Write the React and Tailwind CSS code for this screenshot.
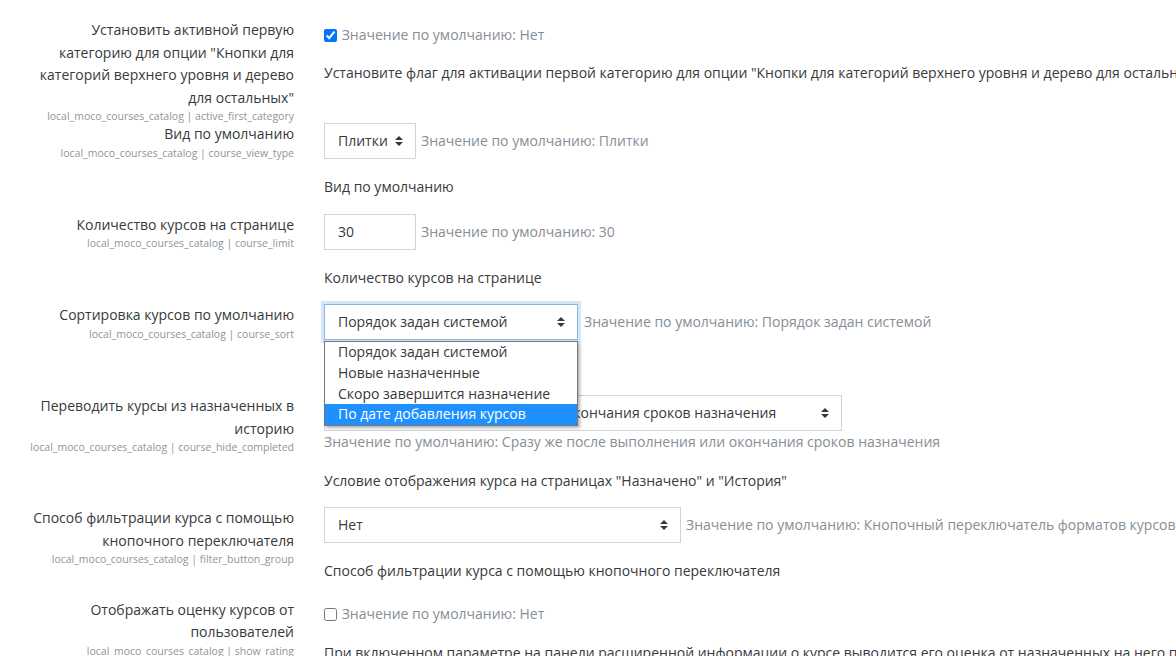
import React from "react";

function Arrows() {
  return (
    <svg width="8" height="10" viewBox="0 0 4 5" className="shrink-0">
      <path d="M2 0L0 2h4zm0 5L0 3h4z" fill="#343a40" />
    </svg>
  );
}

function Select({ value, className = "" }) {
  return (
    <div
      className={`flex h-[36px] shrink-0 items-center justify-between overflow-hidden rounded-none border bg-white pl-[13px] pr-[12px] ${className}`}
    >
      <span className="truncate">{value}</span>
      <Arrows />
    </div>
  );
}

function Row({ label, tech, className = "", children }) {
  return (
    <div className={`flex items-start ${className}`}>
      <div className="w-[294px] shrink-0 text-right">
        <div>{label}</div>
        <span className="block text-[10.5px] leading-[14px] text-[#8e959c]">{tech}</span>
      </div>
      <div className="ml-[30px] whitespace-nowrap">{children}</div>
    </div>
  );
}

export default function App() {
  return (
    <div className="relative h-[656px] w-[1176px] overflow-hidden bg-white font-['Open_Sans',sans-serif] text-[14px] leading-[22.5px] text-[#373a3c]">
      <div className="pt-[19.3px]">
        <Row
          className="h-[104px]"
          label={
            <>
              Установить активной первую
              <br />
              категорию для опции "Кнопки для
              <br />
              категорий верхнего уровня и дерево
              <br />
              для остальных"
            </>
          }
          tech="local_moco_courses_catalog | active_first_category"
        >
          <div className="pt-[4.7px]">
            <div className="flex h-[22.5px] items-center">
              <input type="checkbox" checked readOnly className="m-0 mr-[4.7px] h-[13px] w-[13px]" />
              <span className="text-[#868e96]">Значение по умолчанию: Нет</span>
            </div>
            <div className="mt-[16px]">
              Установите флаг для активации первой категорию для опции "Кнопки для категорий верхнего уровня и дерево для остальных"
            </div>
          </div>
        </Row>

        <Row className="h-[90.7px]" label="Вид по умолчанию" tech="local_moco_courses_catalog | course_view_type">
          <div className="flex items-center">
            <Select value="Плитки" className="w-[92px] border-[#ced4da]" />
            <span className="ml-[5px] text-[#868e96]">Значение по умолчанию: Плитки</span>
          </div>
          <div className="mt-[17px]">Вид по умолчанию</div>
        </Row>

        <Row className="h-[90.3px]" label="Количество курсов на странице" tech="local_moco_courses_catalog | course_limit">
          <div className="flex items-center">
            <div className="flex h-[36px] w-[92px] items-center border border-[#ced4da] bg-white pl-[13px]">30</div>
            <span className="ml-[5px] text-[#868e96]">Значение по умолчанию: 30</span>
          </div>
          <div className="mt-[17px]">Количество курсов на странице</div>
        </Row>

        <Row className="relative z-10 h-[91.2px]" label="Сортировка курсов по умолчанию" tech="local_moco_courses_catalog | course_sort">
          <div className="flex items-center">
            <div className="relative">
              <Select
                value="Порядок задан системой"
                className="w-[254px] border-[#86b7ec] shadow-[0_0_0_3px_rgba(17,119,209,0.18)]"
              />
              <div className="absolute left-0 top-[37px] w-[254px] border border-[#767676] bg-white leading-[20.7px] shadow-[2px_2px_3px_rgba(0,0,0,0.3)]">
                <div className="pl-[13px]">Порядок задан системой</div>
                <div className="pl-[13px]">Новые назначенные</div>
                <div className="pl-[13px]">Скоро завершится назначение</div>
                <div className="bg-[#1e90ff] pl-[13px] text-white">По дате добавления курсов</div>
              </div>
            </div>
            <span className="ml-[6px] text-[#868e96]">Значение по умолчанию: Порядок задан системой</span>
          </div>
          <div className="mt-[17px]">Сортировка курсов по умолчанию</div>
        </Row>

        <Row
          className="h-[112px]"
          label={
            <>
              Переводить курсы из назначенных в
              <br />
              историю
            </>
          }
          tech="local_moco_courses_catalog | course_hide_completed"
        >
          <Select
            value="Сразу же после выполнения или окончания сроков назначения"
            className="h-[35.6px] w-[517.5px] border-[#ced4da]"
          />
          <div className="text-[#868e96]">
            Значение по умолчанию: Сразу же после выполнения или окончания сроков назначения
          </div>
          <div className="mt-[16px]">Условие отображения курса на страницах "Назначено" и "История"</div>
        </Row>

        <Row
          className="h-[91.5px]"
          label={
            <>
              Способ фильтрации курса с помощью
              <br />
              кнопочного переключателя
            </>
          }
          tech="local_moco_courses_catalog | filter_button_group"
        >
          <div className="flex items-center">
            <Select value="Нет" className="w-[357px] border-[#ced4da]" />
            <span className="ml-[5px] text-[#868e96]">
              Значение по умолчанию: Кнопочный переключатель форматов курсов
            </span>
          </div>
          <div className="mt-[17px]">Способ фильтрации курса с помощью кнопочного переключателя</div>
        </Row>

        <Row
          label={
            <>
              Отображать оценку курсов от
              <br />
              пользователей
            </>
          }
          tech="local_moco_courses_catalog | show_rating"
        >
          <div className="pt-[4.3px]">
            <div className="flex h-[22.5px] items-center">
              <input type="checkbox" readOnly className="m-0 mr-[4.7px] h-[13px] w-[13px]" />
              <span className="text-[#868e96]">Значение по умолчанию: Нет</span>
            </div>
            <div className="mt-[16px]">
              При включенном параметре на панели расширенной информации о курсе выводится его оценка от назначенных на него пользователей
            </div>
          </div>
        </Row>
      </div>
    </div>
  );
}
